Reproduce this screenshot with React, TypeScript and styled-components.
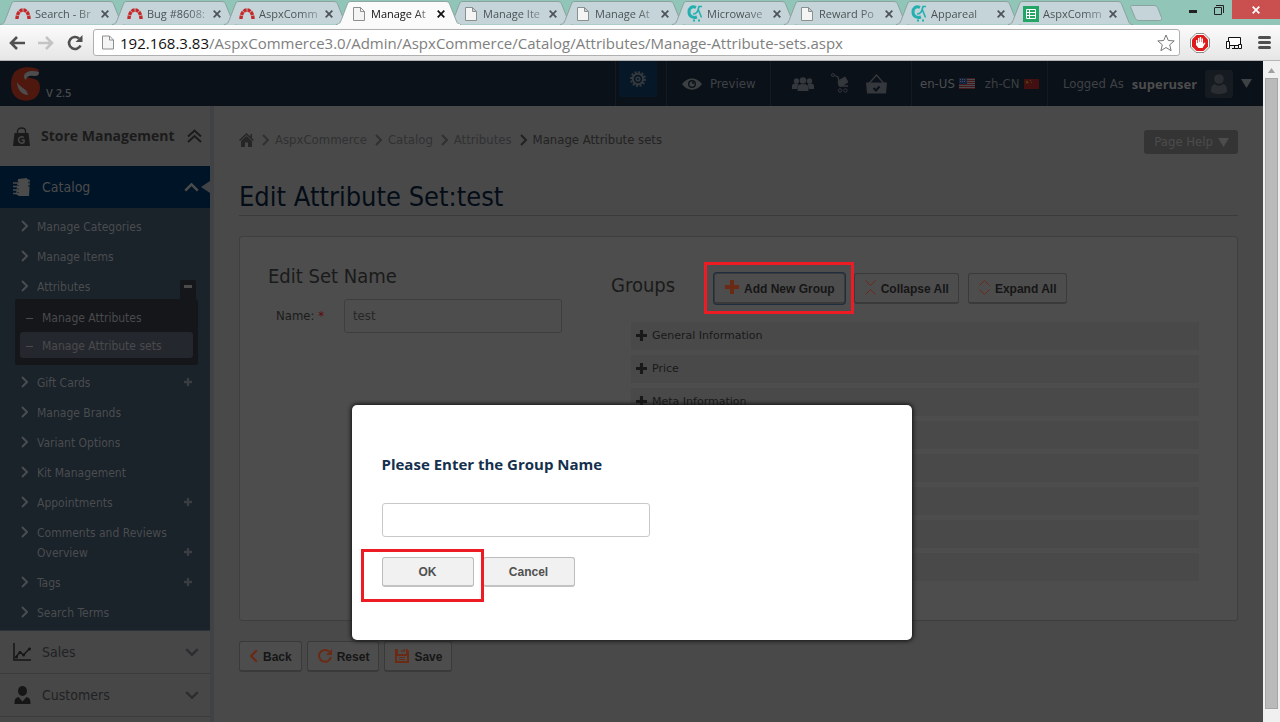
import React from "react";
import styled, { createGlobalStyle, css } from "styled-components";

const ui = `"DejaVu Sans Condensed", "DejaVu Sans", sans-serif`;
const wide = `"DejaVu Sans", sans-serif`;
const chrome = `"Open Sans", "Noto Sans", sans-serif`;
const arial = `"Liberation Sans", sans-serif`;

const GlobalStyle = createGlobalStyle`
  *, *::before, *::after { box-sizing: border-box; }
  html, body { height: 100%; margin: 0; overflow: hidden; }
  body { font: 12px/20px ${ui}; background: #494949; }
  button, input { font: inherit; margin: 0; }
  a { color: inherit; text-decoration: none; }
  ul, ol { list-style: none; margin: 0; padding: 0; }
  h1, h2, h3 { margin: 0; font-weight: 400; }
  svg { display: block; flex: none; }
`;

/* ---------- browser frame ---------- */

const Browser = styled.div`
  display: flex;
  flex-direction: column;
  height: 100vh;
`;

const TabStrip = styled.div`
  display: flex;
  flex: none;
  height: 25px;
  padding-left: 4px;
  background: #91c5b7;
`;

const Tab = styled.div<{ $active?: boolean }>`
  position: relative;
  z-index: ${(p) => (p.$active ? 2 : 1)};
  display: flex;
  align-items: center;
  flex: 0 1 112px;
  min-width: 0;
  height: 25px;
  padding: 2px 3px 0 11px;
  font: 11px/20px ${chrome};
  color: ${(p) => (p.$active ? "#111" : "#4c5356")};
`;

const TabShape = styled.svg`
  position: absolute;
  z-index: -1;
  left: -4px;
  top: 1px;
  width: calc(100% + 14px);
  height: 24px;
`;

const TabLink = styled.a`
  display: flex;
  align-items: center;
  gap: 4px;
  flex: 1;
  min-width: 0;
`;

const Favicon = styled.span`
  display: flex;
  justify-content: center;
  flex: none;
  width: 16px;
`;

const TabTitle = styled.span`
  flex: 1;
  white-space: nowrap;
  mask-image: linear-gradient(90deg, #000 65%, rgba(0, 0, 0, 0.3));
`;

const PlainButton = styled.button`
  display: flex;
  align-items: center;
  justify-content: center;
  padding: 0;
  border: 0;
  background: none;
  color: inherit;
`;

const TabClose = styled(PlainButton)`
  width: 16px;
  height: 16px;
`;

const NewTab = styled(PlainButton)`
  align-self: center;
  margin-left: 6px;
`;

const WindowButtons = styled.div`
  display: flex;
  margin-left: auto;
  height: 19px;
`;

const WindowButton = styled(PlainButton)<{ $close?: boolean }>`
  width: ${(p) => (p.$close ? 48 : 26)}px;
  background: ${(p) => (p.$close ? "#c9504f" : "none")};
  color: ${(p) => (p.$close ? "#fff" : "#222")};
`;

const Toolbar = styled.div`
  display: flex;
  align-items: center;
  flex: none;
  height: 36px;
  padding: 0 9px;
  gap: 10px;
  background: linear-gradient(#fbfbfb, #e6e6e6);
  border-bottom: 1px solid #b4b4b4;
  color: #505050;
`;

const ToolbarGroup = styled.div<{ $gap: number }>`
  display: flex;
  align-items: center;
  gap: ${(p) => p.$gap}px;
`;

const Omnibox = styled.div`
  display: flex;
  align-items: center;
  flex: 1;
  min-width: 0;
  height: 27px;
  padding: 0 4px 0 8px;
  background: #fff;
  border: 1px solid #b0b0b0;
  border-radius: 3px;
  font: 15px/24px ${chrome};
  color: #111;

  label { margin-left: 6px; }
  input {
    flex: 1;
    min-width: 0;
    padding: 0;
    border: 0;
    outline: 0;
    background: none;
    color: #808080;
  }
`;

const Viewport = styled.div`
  display: flex;
  flex: 1;
  min-height: 0;
`;

const Scrollbar = styled.div`
  display: flex;
  flex-direction: column;
  align-items: center;
  flex: none;
  width: 17px;
  padding: 7px 0 13px;
  gap: 5px;
  background: #f0f0f0;
`;

const Thumb = styled.div`
  flex: 1;
  width: 13px;
  background: #bababa;
  border: 1px solid #a6a6a6;
`;

/* ---------- admin page ---------- */

const Page = styled.div`
  position: relative;
  display: flex;
  flex-direction: column;
  flex: 1;
  min-width: 0;
  overflow: hidden;
`;

const Header = styled.header`
  display: flex;
  flex: none;
  height: 45px;
  background: #0b1119;
  color: #4a4a4c;
  font-size: 13px;
`;

const Brand = styled.a`
  display: flex;
  align-items: center;
  gap: 5px;
  margin-right: auto;
  padding-left: 11px;
  font: 600 11px/16px ${chrome};
  color: #484a4c;

  span { padding-top: 19px; }
`;

const HeaderGroup = styled.div<{ $width: number; $gap?: number; $pad?: number }>`
  display: flex;
  align-items: center;
  flex: none;
  width: ${(p) => p.$width}px;
  gap: ${(p) => p.$gap ?? 0}px;
  padding-left: ${(p) => p.$pad ?? 0}px;
  border-left: 1px solid #131a22;
  color: #3f4245;
  white-space: nowrap;
`;

const GearButton = styled(PlainButton)`
  align-self: flex-start;
  width: 38px;
  height: 36px;
  background: #061827;
  border-radius: 0 0 2px 2px;
`;

const Language = styled.a<{ $current?: boolean }>`
  display: flex;
  align-items: center;
  gap: 4px;
  color: ${(p) => (p.$current ? "#4d4f51" : "#3c3f41")};
`;

const UserName = styled.b`
  font: 700 13px/20px ${chrome};
  color: #4d4d4d;
`;

const Avatar = styled.span`
  display: flex;
  align-items: center;
  justify-content: center;
  width: 28px;
  height: 28px;
  border-radius: 3px;
  background: #161b22;
  color: #2a2e33;
`;

const Body = styled.div`
  display: flex;
  flex: 1;
  min-height: 0;
`;

const Sidebar = styled.nav`
  flex: none;
  width: 214px;
  background: #474747;
  border-right: 4px solid #414245;
  overflow: hidden;
`;

const SideTitle = styled.h2`
  display: flex;
  align-items: center;
  height: 60px;
  padding: 0 8px 0 13px;
  gap: 10px;
  font: 700 14px/20px ${chrome};
  color: #1b1b1b;

  span { flex: 1; white-space: nowrap; }
`;

const Section = styled.a<{ $open?: boolean }>`
  display: flex;
  align-items: center;
  gap: 11px;
  height: ${(p) => (p.$open ? 42 : 43)}px;
  padding: 0 11px 0 13px;
  font-size: 14px;
  color: #202224;
  border-bottom: 1px solid #3b3b3b;

  span { flex: 1; }
  svg:last-child { color: #2b2d30; }

  ${(p) =>
    p.$open &&
    css`
      position: relative;
      border-bottom: 0;
      background: #001427;
      color: #4b4b4b;
      svg:last-child { color: #4b4b4b; }
      &::after {
        content: "";
        position: absolute;
        right: 0;
        border: solid transparent;
        border-width: 6px 9px 6px 0;
        border-right-color: #424346;
      }
    `}
`;

const Menu = styled.ul`
  padding: 3px 0;
  background: #1a222a;
  border-bottom: 1px solid #2c3238;
`;

const MenuLink = styled.a`
  display: flex;
  align-items: flex-start;
  gap: 9px;
  padding: 6px 18px 4px 21px;
  color: #4a4d4f;

  & > svg:first-child { margin-top: 3px; }
  span { flex: 1; }
  & > svg:last-child { align-self: flex-end; margin-bottom: 7px; color: #3a3e42; }
`;

const OpenMark = styled.i`
  align-self: flex-end;
  width: 16px;
  height: 21px;
  margin: -1px -4px -4px 0;
  padding: 5px 4px;
  border-radius: 2px 2px 0 0;
  background: #14161a;

  &::before {
    content: "";
    display: block;
    height: 3px;
    background: #4b4b4b;
  }
`;

const SubMenu = styled.ul`
  display: grid;
  gap: 2px;
  margin: -2px 12px 2px 15px;
  padding: 5px 5px 7px;
  border-radius: 3px;
  background: #14161a;
`;

const SubLink = styled.a<{ $current?: boolean }>`
  display: flex;
  align-items: center;
  gap: 9px;
  height: 26px;
  padding: 2px 0 0 6px;
  border-radius: 3px;
  color: #4a4a4c;
  background: ${(p) => (p.$current ? "#24282e" : "none")};

  &::before {
    content: "";
    width: 7px;
    height: 1px;
    background: #4a4a4c;
  }
`;

const Main = styled.main`
  flex: 1;
  min-width: 0;
  padding: 24px 25px;
  background: #494949;
`;

const TopLine = styled.div`
  display: flex;
  align-items: flex-start;
  justify-content: space-between;
  height: 44px;
  font-size: 13px;
`;

const Crumbs = styled.ol`
  display: flex;
  align-items: center;
  color: #303132;

  li { display: flex; align-items: center; }
  li + li svg { margin: 0 6px 0 8px; }
  li:last-child { color: #222; }
`;

const PageHelp = styled.button`
  display: flex;
  align-items: center;
  gap: 5px;
  height: 24px;
  padding: 0 9px 0 10px;
  border: 0;
  border-radius: 3px;
  background: #343434;
  color: #4c4c4c;
`;

const Title = styled.h1`
  height: 42px;
  font-size: 27px;
  line-height: 46px;
  color: #040d17;
  border-bottom: 1px solid #3b3b3b;
`;

const Panel = styled.section`
  display: grid;
  grid-template-columns: 343px 1fr;
  min-height: 385px;
  margin: 20px 0;
  padding: 27px 38px 39px 28px;
  background: #4d4d4d;
  border: 1px solid #3e3e3e;
  border-radius: 3px;
`;

const SubTitle = styled.h2`
  font-size: 20px;
  line-height: 24px;
  color: #1a1a1a;
`;

const Field = styled.div`
  display: flex;
  gap: 20px;
  margin-top: 11px;
  padding-left: 8px;
  font-size: 13px;
  line-height: 34px;
  color: #1b1b1b;

  em { font-style: normal; color: #5c0a0a; }
  input {
    width: 218px;
    height: 34px;
    padding: 0 8px;
    background: none;
    border: 1px solid #3e3e3e;
    border-radius: 3px;
    color: #262626;
  }
`;

const GroupBar = styled.div`
  display: flex;
  align-items: center;
  gap: 9px;
  height: 30px;
  margin-top: 9px;
  white-space: nowrap;

  h2 { align-self: flex-start; width: 94px; }
`;

const ToolButton = styled.button<{ $focused?: boolean }>`
  display: flex;
  align-items: center;
  gap: 5px;
  height: 31px;
  padding: 2px 9px 0 10px;
  font: 700 12px/16px ${arial};
  color: #161616;
  background: #4d4d4d;
  border: 1px solid #3a3a3a;
  border-bottom-width: 2px;
  border-radius: 3px;
  box-shadow: ${(p) => (p.$focused ? "0 0 0 1px #1f2d40" : "none")};

  svg { margin-bottom: 3px; color: #6a2a14; }
`;

const Callout = styled.div<{ $inset: string }>`
  position: relative;

  &::after {
    content: "";
    position: absolute;
    z-index: 3;
    inset: ${(p) => p.$inset};
    border: 3px solid #ed1c24;
    pointer-events: none;
  }
`;

const Groups = styled.ul`
  display: grid;
  gap: 5px;
  margin: 19px 0 0 20px;
`;

const GroupRow = styled.li`
  display: flex;
  align-items: center;
  gap: 5px;
  height: 28px;
  padding-left: 5px;
  background: #494949;
  color: #191919;
  font: 11px/16px ${wide};

  svg { margin-bottom: 2px; }
`;

const Actions = styled.div`
  display: flex;
  gap: 5px;
`;

const Dialog = styled.div`
  position: absolute;
  z-index: 5;
  top: 344px;
  left: 50%;
  width: 560px;
  padding: 48px 30px 53px;
  transform: translateX(-50%);
  background: #fff;
  border-radius: 5px;
  box-shadow: 0 0 4px 1px #111;

  h3 {
    font: 700 15px/22px ${chrome};
    color: #14304d;
  }
  input {
    display: block;
    width: 268px;
    height: 34px;
    margin: 28px 0 20px;
    padding: 0 8px;
    border: 1px solid #c8c8c8;
    border-radius: 3px;
  }
`;

const DialogButtons = styled.div`
  display: flex;
  gap: 9px;
`;

const DialogButton = styled.button`
  width: 92px;
  height: 30px;
  padding: 0;
  font: 700 12px/16px ${arial};
  color: #505050;
  background: #f1f1f1;
  border: 1px solid #bcbcbc;
  border-bottom: 2px solid #c2c2c2;
  border-radius: 3px;
`;

/* ---------- icons ---------- */

const DocIcon = ({ w = 12, h = 14 }: { w?: number; h?: number }) => (
  <svg width={w} height={h} viewBox="0 0 12 14" fill="#f4f4f4" stroke="#8a908e">
    <path d="M.5.5h7l4 4v9H.5zM7.5.5v4h4" />
  </svg>
);

const RedmineIcon = () => (
  <svg width="16" height="12" viewBox="0 0 16 12" fill="none" stroke="#c5282a" strokeWidth="3.4">
    <path d="M2 11C2 -1 14 -1 14 11" strokeDasharray="3.4 .7" />
  </svg>
);

const CartLogo = () => (
  <svg width="16" height="17" viewBox="0 0 16 17" fill="none" stroke="#25b0b0">
    <path d="M9 2.500C5 .5 2 3 2 7s3.500 6.500 8 5" strokeWidth="3" />
    <path d="M6 9c4 0 5-3 6-7.500h3M11.500 5l3 7.500" strokeWidth="1.600" />
    <path d="M6 15.500h2M11 15.500h2" strokeWidth="2" />
  </svg>
);

const SheetIcon = () => (
  <svg width="16" height="16" viewBox="0 0 16 16">
    <path fill="#23a566" d="M0 0h16v16H0z" />
    <path fill="none" stroke="#fff" d="M3.500 3.500h9v9h-9zM3.500 6.500h9M3.500 9.500h9M6.500 3.500v9" />
  </svg>
);

const CrossIcon = ({ size = 8 }: { size?: number }) => (
  <svg width={size} height={size} viewBox="0 0 8 8" stroke="currentColor" strokeWidth="1.700">
    <path d="M.7.7l6.600 6.600M7.300.7L.7 7.300" />
  </svg>
);

const Chevron = ({ dir, size = 10, weight = 2 }: { dir: "right" | "left" | "up" | "down"; size?: number; weight?: number }) => {
  const vertical = dir === "up" || dir === "down";
  const paths = {
    right: "M1 1l5 5-5 5",
    left: "M6 1L1 6l5 5",
    up: "M1 6l5-5 5 5",
    down: "M1 1l5 5 5-5",
  };
  return (
    <svg
      width={vertical ? size : Math.round(size * 0.6)}
      height={vertical ? Math.round(size * 0.6) : size}
      viewBox={vertical ? "0 0 12 7" : "0 0 7 12"}
      fill="none"
      stroke="currentColor"
      strokeWidth={weight}
    >
      <path d={paths[dir]} />
    </svg>
  );
};

const PlusIcon = ({ size }: { size: number }) => (
  <svg width={size} height={size} viewBox="0 0 12 12" fill="currentColor">
    <path d="M4.300 0h3.400v4.300H12v3.400H7.700V12H4.300V7.700H0V4.300h4.300z" />
  </svg>
);

const Triangle = ({ w = 11, h = 9 }: { w?: number; h?: number }) => (
  <svg width={w} height={h} viewBox="0 0 11 9" fill="currentColor">
    <path d="M0 0h11L5.500 9z" />
  </svg>
);

const LogoIcon = () => (
  <svg width="30" height="34" viewBox="0 0 30 34">
    <path fill="#4f180f" d="M28 3C22-1 8-1 3 6-1 12-1 23 3 28c5 7 15 7 21 3 6-4 6-13 3-17-3-3-9-3-11-4 1-3 6-2 11-4z" />
    <path fill="#4d4d4d" d="M13 9c1-5 8-6 15-4 0 3-1 4-5 4-5-1-8 1-8 4-2-1-2-3-2-4zM6 15c3 6 10 6 11 13-6 0-11-6-11-13z" />
  </svg>
);

const GearIcon = () => (
  <svg width="16" height="16" viewBox="0 0 16 16" fill="none" stroke="#35393d">
    <circle cx="8" cy="8" r="5.200" strokeWidth="2" />
    <circle cx="8" cy="8" r="7" strokeWidth="2" strokeDasharray="2 1.660" />
    <circle cx="8" cy="8" r="1.800" strokeWidth="1.500" />
  </svg>
);

const EyeIcon = () => (
  <svg width="20" height="12" viewBox="0 0 20 12">
    <path fill="#3d4043" d="M0 6C5-1.500 15-1.500 20 6 15 13.500 5 13.500 0 6z" />
    <circle cx="10" cy="6" r="4" fill="#0b1119" />
    <circle cx="10" cy="6" r="2.600" fill="#3d4043" />
    <circle cx="11" cy="5" r="1" fill="#0b1119" />
  </svg>
);

const PeopleIcon = () => (
  <svg width="22" height="14" viewBox="0 0 22 14" fill="#34373b">
    <circle cx="4.500" cy="4" r="2.700" />
    <circle cx="17.500" cy="4" r="2.700" />
    <path d="M0 12V9c0-2 2-2.500 4-2.500S7 7 6 8L5 12zM22 12V9c0-2-2-2.500-4-2.500S15 7 16 8l1 4z" />
    <circle cx="11" cy="3.500" r="3.300" />
    <path d="M5.500 14v-3.500c0-2.500 2-3.500 5.500-3.500s5.500 1 5.500 3.500V14z" />
  </svg>
);

const TrolleyIcon = () => (
  <svg width="18" height="21" viewBox="0 0 18 21" fill="none" stroke="#34373b">
    <circle cx="2" cy="2" r="1.500" />
    <path d="M3.500 2.500L7 4l2 9h8" strokeWidth="1.300" />
    <path fill="#34373b" d="M7 8l7-4 3 5-6 4H8z" />
    <circle cx="9" cy="17.500" r="1.700" />
    <circle cx="14.500" cy="17.500" r="1.700" />
  </svg>
);

const BasketIcon = () => (
  <svg width="21" height="20" viewBox="0 0 21 20">
    <path fill="none" stroke="#34373b" strokeWidth="1.400" d="M3 9.500L10.500 1 18 9.500" />
    <path fill="#34373b" d="M0 8.500h21l-1 11H1z" />
    <path fill="none" stroke="#0b1119" strokeWidth="2" d="M7.500 14l2.500 2.500 3.500-4" />
  </svg>
);

const UsFlag = () => (
  <svg width="16" height="11" viewBox="0 0 16 11">
    <path fill="#4a4a4c" d="M0 0h16v11H0z" />
    <path stroke="#43191c" d="M0 .5h16M0 2.500h16M0 4.500h16M0 6.500h16M0 8.500h16M0 10.500h16" />
    <path fill="#15233f" d="M0 0h8v6H0z" />
    <path stroke="#454b5a" strokeDasharray="1 1" d="M1 1.500h6M1 3.500h6" />
  </svg>
);

const CnFlag = () => (
  <svg width="15" height="10" viewBox="0 0 15 10">
    <path fill="#430f10" d="M0 0h15v10H0z" />
    <path fill="#4d410c" d="M3 1l.6 1.400H5L4 3.400l.4 1.500L3 4l-1.400.9L2 3.400 1 2.400h1.400zM6 1h1v1H6zM7 3h1v1H7z" />
  </svg>
);

const UserIcon = () => (
  <svg width="18" height="20" viewBox="0 0 18 20" fill="currentColor">
    <circle cx="9" cy="5" r="4.800" />
    <path d="M1 17c0-5 2-7 4-7 2 2 6 2 8 0 2 0 4 2 4 7 0 4-16 4-16 0z" />
  </svg>
);

const BagIcon = () => (
  <svg width="18" height="19" viewBox="0 0 18 19">
    <path fill="none" stroke="#1a1a1a" strokeWidth="1.300" d="M4.500 7V4c0-4 8-4 8 0v3" />
    <path fill="#1a1a1a" d="M1.500 6h14l1.500 13H0z" />
    <path fill="none" stroke="#474747" strokeWidth="1.500" d="M11 10.500C8 8.500 5.500 10.500 5.500 13s3 4 5.500 2.500V13H8.500" />
  </svg>
);

const DoubleUp = () => (
  <svg width="15" height="14" viewBox="0 0 15 14" fill="none" stroke="#1b1b1b" strokeWidth="2">
    <path d="M1 7.500l6.500-6 6.500 6M1 13l6.500-6 6.500 6" />
  </svg>
);

const BookIcon = () => (
  <svg width="18" height="18" viewBox="0 0 18 18">
    <path fill="#4b4b4b" d="M5 1l9-1v1l3 1-1 16H6L3 16z" />
    <path stroke="#4b4b4b" strokeWidth="1.500" d="M0 5h5M0 8.500h5M0 12h5M0 15.500h5" />
    <path stroke="#001427" d="M5 3.500v1M5 7v1M5 10.500v1M5 14v1M16 3.500v2M16 7v2" />
  </svg>
);

const ChartIcon = () => (
  <svg width="18" height="18" viewBox="0 0 18 18" fill="none" stroke="#161616" strokeWidth="1.500">
    <path d="M1 0v17h17M3 14l4-5 3.500 3L17 5" />
    <path strokeWidth="3" strokeLinecap="round" d="M3.500 14h0M7 9.500h0M10.500 12h0M16.500 6h0" />
  </svg>
);

const PersonIcon = () => (
  <svg width="18" height="18" viewBox="0 0 18 18" fill="#161616">
    <ellipse cx="9.500" cy="5" rx="4.500" ry="5" />
    <path d="M1.500 18c0-5 1-6 4-7l4 4.500 4-4.500c3 1 4 2 4 7z" />
  </svg>
);

const HomeIcon = () => (
  <svg width="15" height="14" viewBox="0 0 15 14" fill="#262626">
    <path d="M7.500 0L15 7l-1 1-6.500-6L1 8 0 7zM11.500 1H13v4l-1.500-1.500z" />
    <path d="M7.500 3L13 8v6H9V9.500H6V14H2V8z" />
  </svg>
);

const ResetIcon = () => (
  <svg width="14" height="14" viewBox="0 0 14 14" fill="none" stroke="currentColor" strokeWidth="2">
    <path d="M12.800 8A5.900 5.900 0 1 1 11 2.600" />
    <path fill="currentColor" stroke="none" d="M14 0v6H8z" />
  </svg>
);

const SaveIcon = () => (
  <svg width="14" height="14" viewBox="0 0 14 14">
    <path fill="currentColor" d="M0 0h3v5h8V0h1l2 2v12H0z" />
    <path fill="currentColor" d="M6 1h1.500v2H6zM8.500 0H10v3H8.500z" />
    <path fill="#4d4d4d" d="M2 7h10v5H2z" />
    <path stroke="currentColor" d="M4 8.500h6M4 10.500h6" />
  </svg>
);

const CollapseIcon = () => (
  <svg width="11" height="15" viewBox="0 0 11 15" fill="none" stroke="currentColor">
    <path d="M.5.5l5 5 5-5M.5 14.500l5-5 5 5" />
  </svg>
);

const ExpandIcon = () => (
  <svg width="11" height="15" viewBox="0 0 11 15" fill="none" stroke="currentColor">
    <path d="M.5 5.500l5-5 5 5M.5 9.500l5 5 5-5" />
  </svg>
);

const ArrowIcon = ({ back, color }: { back?: boolean; color: string }) => (
  <svg width="16" height="14" viewBox="0 0 16 14" fill="none" stroke={color} strokeWidth="2.600">
    <path d={back ? "M8 1L2 7l6 6M2 7h14" : "M8 1l6 6-6 6M14 7H0"} />
  </svg>
);

const ReloadIcon = () => (
  <svg width="16" height="16" viewBox="0 0 16 16" fill="none" stroke="#505050" strokeWidth="2.600">
    <path d="M13.500 10.500A6 6 0 1 1 12 3.500" />
    <path fill="#505050" stroke="none" d="M15.500 0v7h-7z" />
  </svg>
);

const StarIcon = () => (
  <svg width="18" height="18" viewBox="0 0 18 18" fill="#fff" stroke="#777">
    <path d="M9 1l2.300 5.500 5.900.4-4.500 3.900 1.400 5.900L9 13.500l-5.100 3.200 1.400-5.900L.8 6.900l5.900-.4z" />
  </svg>
);

const StopHandIcon = () => (
  <svg width="20" height="20" viewBox="0 0 20 20">
    <path fill="#fff" stroke="#888" d="M6 .5h8L19.500 6v8L14 19.500H6L.5 14V6z" />
    <path fill="#df1c1c" d="M6.500 2h7L18 6.500v7L13.500 18h-7L2 13.500v-7z" />
    <path fill="#fff" d="M6 7h1.300v3H8V5h1.300v4h.5V4h1.400v5h.5V5.500H13V11l1.500-1.500 1 .5-3 5H8.500L6 12z" />
  </svg>
);

const DevicesIcon = () => (
  <svg width="18" height="14" viewBox="0 0 18 14" fill="#fff" stroke="#111">
    <path d="M3.500 1.500h12v8h-12zM7 12.500h6M9.500 10v2" />
    <path d="M1.500 5.500h3v7h-3zM13.500 8.500h3v4h-3z" />
  </svg>
);

const MenuIcon = () => (
  <svg width="13" height="13" viewBox="0 0 13 13" stroke="#505050" strokeWidth="3" strokeLinecap="round">
    <path d="M1.500 1.500h10M1.500 6.500h10M1.500 11.500h10" />
  </svg>
);

/* ---------- content ---------- */

const tabs = [
  { title: "Search - Br", icon: <RedmineIcon /> },
  { title: "Bug #8608:", icon: <RedmineIcon /> },
  { title: "AspxComm", icon: <RedmineIcon /> },
  { title: "Manage At", icon: <DocIcon />, active: true },
  { title: "Manage Ite", icon: <DocIcon /> },
  { title: "Manage At", icon: <DocIcon /> },
  { title: "Microwave", icon: <CartLogo /> },
  { title: "Reward Po", icon: <DocIcon /> },
  { title: "Appareal", icon: <CartLogo /> },
  { title: "AspxComm", icon: <SheetIcon /> },
];

const menu: { label: string; more?: boolean; children?: string[] }[] = [
  { label: "Manage Categories" },
  { label: "Manage Items" },
  { label: "Attributes", children: ["Manage Attributes", "Manage Attribute sets"] },
  { label: "Gift Cards", more: true },
  { label: "Manage Brands" },
  { label: "Variant Options" },
  { label: "Kit Management" },
  { label: "Appointments", more: true },
  { label: "Comments and Reviews Overview", more: true },
  { label: "Tags", more: true },
  { label: "Search Terms" },
];

const groups = ["General Information", "Price", "Meta Information", "", "", "", "", ""];

const BrowserFrame = () => (
  <>
    <TabStrip>
      {tabs.map((t, i) => (
        <Tab key={i} $active={t.active}>
          <TabShape viewBox="0 0 126 24" preserveAspectRatio="none">
            <path
              d="M0 23.500C4 23 4 22 6 17L11 4C12 1 13 .5 15 .5H109C112 .5 113 1 114 4L120 19C121 22 122 23.500 125 23.500"
              fill={t.active ? "#fafafa" : "#c5d4d9"}
              stroke={t.active ? "#8fa7a3" : "#8aa39f"}
            />
            {t.active && <path d="M2 23.500H124" stroke="#fafafa" />}
          </TabShape>
          <TabLink href="#">
            <Favicon>{t.icon}</Favicon>
            <TabTitle>{t.title}</TabTitle>
          </TabLink>
          <TabClose aria-label="Close tab">
            <CrossIcon />
          </TabClose>
        </Tab>
      ))}
      <NewTab aria-label="New tab">
        <svg width="32" height="16" viewBox="0 0 32 16" fill="#c5d4d9" stroke="#8aa39f">
          <path d="M2 .5H24c2 0 3 1 4 3l3.500 9c.5 2 0 3-2 3H9c-2 0-3-1-4-3L1 3C0 1 1 .5 2 .5z" />
        </svg>
      </NewTab>
      <WindowButtons>
        <WindowButton aria-label="Minimize">
          <svg width="8" height="7"><path d="M0 4h8v3H0z" fill="currentColor" /></svg>
        </WindowButton>
        <WindowButton aria-label="Restore">
          <svg width="10" height="10" viewBox="0 0 10 10" fill="none" stroke="currentColor">
            <path d="M2 .5h7.500V8M.5 3v6.500h7v-7h-7" />
          </svg>
        </WindowButton>
        <WindowButton $close aria-label="Close">
          <CrossIcon />
        </WindowButton>
      </WindowButtons>
    </TabStrip>
    <Toolbar>
      <ToolbarGroup $gap={13}>
        <PlainButton aria-label="Back"><ArrowIcon back color="#505050" /></PlainButton>
        <PlainButton aria-label="Forward"><ArrowIcon color="#c4c4c4" /></PlainButton>
        <PlainButton aria-label="Reload"><ReloadIcon /></PlainButton>
      </ToolbarGroup>
      <Omnibox>
        <DocIcon w={12} h={15} />
        <label htmlFor="address">192.168.3.83</label>
        <input id="address" defaultValue="/AspxCommerce3.0/Admin/AspxCommerce/Catalog/Attributes/Manage-Attribute-sets.aspx" />
        <PlainButton aria-label="Bookmark"><StarIcon /></PlainButton>
      </Omnibox>
      <ToolbarGroup $gap={15}>
        <PlainButton aria-label="Ad blocker"><StopHandIcon /></PlainButton>
        <PlainButton aria-label="Devices"><DevicesIcon /></PlainButton>
        <PlainButton aria-label="Menu"><MenuIcon /></PlainButton>
      </ToolbarGroup>
    </Toolbar>
  </>
);

const PageHeader = () => (
  <Header>
    <Brand href="#">
      <LogoIcon />
      <span>V 2.5</span>
    </Brand>
    <HeaderGroup $width={51} $pad={3}>
      <GearButton aria-label="Settings"><GearIcon /></GearButton>
    </HeaderGroup>
    <HeaderGroup as="a" href="#" $width={104} $pad={15} $gap={8}>
      <EyeIcon />
      Preview
    </HeaderGroup>
    <HeaderGroup $width={141} $pad={21} $gap={17}>
      <PeopleIcon />
      <TrolleyIcon />
      <BasketIcon />
    </HeaderGroup>
    <HeaderGroup $width={136} $pad={8} $gap={10}>
      <Language href="#" $current>en-US <UsFlag /></Language>
      <Language href="#">zh-CN <CnFlag /></Language>
    </HeaderGroup>
    <HeaderGroup $width={216} $pad={15} $gap={8}>
      Logged As
      <UserName>superuser</UserName>
      <Avatar><UserIcon /></Avatar>
      <Triangle />
    </HeaderGroup>
  </Header>
);

const SideNav = () => (
  <Sidebar>
    <SideTitle>
      <BagIcon />
      <span>Store Management</span>
      <DoubleUp />
    </SideTitle>
    <Section href="#" $open>
      <BookIcon />
      <span>Catalog</span>
      <Chevron dir="up" size={15} />
    </Section>
    <Menu>
      {menu.map((m) => (
        <li key={m.label}>
          <MenuLink href="#">
            <Chevron dir="right" size={12} weight={2} />
            <span>{m.label}</span>
            {m.more && <PlusIcon size={8} />}
            {m.children && <OpenMark />}
          </MenuLink>
          {m.children && (
            <SubMenu>
              {m.children.map((c, i) => (
                <li key={c}><SubLink href="#" $current={i === 1}>{c}</SubLink></li>
              ))}
            </SubMenu>
          )}
        </li>
      ))}
    </Menu>
    <Section href="#">
      <ChartIcon />
      <span>Sales</span>
      <Chevron dir="down" size={14} />
    </Section>
    <Section href="#">
      <PersonIcon />
      <span>Customers</span>
      <Chevron dir="down" size={14} />
    </Section>
  </Sidebar>
);

const EditForm = () => (
  <Main>
    <TopLine>
      <Crumbs>
        <li><a href="#" aria-label="Home"><HomeIcon /></a></li>
        {["AspxCommerce", "Catalog", "Attributes", "Manage Attribute sets"].map((c) => (
          <li key={c}>
            <Chevron dir="right" size={12} weight={2} />
            <a href="#">{c}</a>
          </li>
        ))}
      </Crumbs>
      <PageHelp>Page Help <Triangle /></PageHelp>
    </TopLine>
    <Title>Edit Attribute Set:test</Title>
    <Panel>
      <div>
        <SubTitle>Edit Set Name</SubTitle>
        <Field>
          <label htmlFor="set-name">Name: <em>*</em></label>
          <input id="set-name" defaultValue="test" />
        </Field>
      </div>
      <div>
        <GroupBar>
          <SubTitle>Groups</SubTitle>
          <Callout $inset="-11px -9px -10px -10px">
            <ToolButton $focused><PlusIcon size={14} />Add New Group</ToolButton>
          </Callout>
          <ToolButton><CollapseIcon />Collapse All</ToolButton>
          <ToolButton><ExpandIcon />Expand All</ToolButton>
        </GroupBar>
        <Groups>
          {groups.map((g, i) => (
            <GroupRow key={i}>
              {g && <PlusIcon size={11} />}
              {g}
            </GroupRow>
          ))}
        </Groups>
      </div>
    </Panel>
    <Actions>
      <ToolButton><Chevron dir="left" size={14} weight={2} />Back</ToolButton>
      <ToolButton><ResetIcon />Reset</ToolButton>
      <ToolButton><SaveIcon />Save</ToolButton>
    </Actions>
  </Main>
);

export default function App() {
  return (
    <Browser>
      <GlobalStyle />
      <BrowserFrame />
      <Viewport>
        <Page>
          <PageHeader />
          <Body>
            <SideNav />
            <EditForm />
          </Body>
          <Dialog role="dialog" aria-labelledby="group-title">
            <h3 id="group-title">Please Enter the Group Name</h3>
            <input aria-labelledby="group-title" />
            <DialogButtons>
              <Callout $inset="-8px -10px -15px -21px">
                <DialogButton>OK</DialogButton>
              </Callout>
              <DialogButton>Cancel</DialogButton>
            </DialogButtons>
          </Dialog>
        </Page>
        <Scrollbar>
          <svg width="7" height="5" viewBox="0 0 7 5" fill="#a0a0a0"><path d="M3.500 0L7 5H0z" /></svg>
          <Thumb />
        </Scrollbar>
      </Viewport>
    </Browser>
  );
}
